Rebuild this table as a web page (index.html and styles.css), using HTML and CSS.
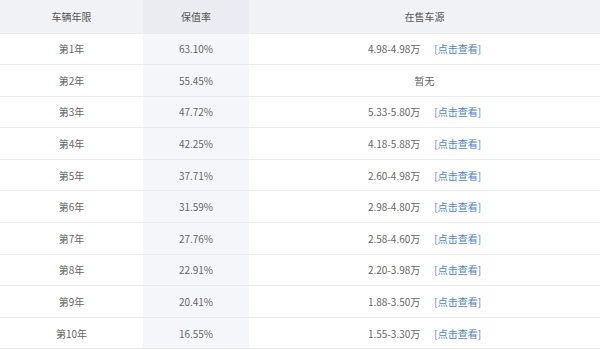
FILE: index.html
```html
<!DOCTYPE html>
<html lang="zh-CN">
<head>
  <meta charset="UTF-8" />
  <title>保值率</title>
  <link rel="stylesheet" href="styles.css">
</head>
<body>
  <table class="rate-table">
    <thead>
      <tr>
        <th class="col-year">车辆年限</th>
        <th class="col-rate">保值率</th>
        <th class="col-source">在售车源</th>
      </tr>
    </thead>
    <tbody>
      <tr><td>第1年</td><td class="col-rate">63.10%</td><td><span class="price">4.98-4.98万</span><a href="#">[点击查看]</a></td></tr>
      <tr><td>第2年</td><td class="col-rate">55.45%</td><td>暂无</td></tr>
      <tr><td>第3年</td><td class="col-rate">47.72%</td><td><span class="price">5.33-5.80万</span><a href="#">[点击查看]</a></td></tr>
      <tr><td>第4年</td><td class="col-rate">42.25%</td><td><span class="price">4.18-5.88万</span><a href="#">[点击查看]</a></td></tr>
      <tr><td>第5年</td><td class="col-rate">37.71%</td><td><span class="price">2.60-4.98万</span><a href="#">[点击查看]</a></td></tr>
      <tr><td>第6年</td><td class="col-rate">31.59%</td><td><span class="price">2.98-4.80万</span><a href="#">[点击查看]</a></td></tr>
      <tr><td>第7年</td><td class="col-rate">27.76%</td><td><span class="price">2.58-4.60万</span><a href="#">[点击查看]</a></td></tr>
      <tr><td>第8年</td><td class="col-rate">22.91%</td><td><span class="price">2.20-3.98万</span><a href="#">[点击查看]</a></td></tr>
      <tr><td>第9年</td><td class="col-rate">20.41%</td><td><span class="price">1.88-3.50万</span><a href="#">[点击查看]</a></td></tr>
      <tr><td>第10年</td><td class="col-rate">16.55%</td><td><span class="price">1.55-3.30万</span><a href="#">[点击查看]</a></td></tr>
    </tbody>
  </table>
</body>
</html>
```

FILE: styles.css
```css
* {
  margin: 0; padding: 0; box-sizing: border-box;
}

body {
  background: #fff;
  font-family: "Noto Sans CJK SC", "Noto Sans", sans-serif;
  font-size: 10px;
  color: #666;
}

/* Table */
.rate-table {
  width: 600px;
  border-collapse: collapse;
  table-layout: fixed;
}
.rate-table th,
.rate-table td {
  text-align: center;
  vertical-align: middle;
  font-weight: normal;
  border-bottom: 1px solid #ebebeb;
}
.rate-table th {
  height: 33px;
  background: #f1f2f6;
  color: #555;
}
.rate-table td {
  height: 31.6px;
}
.rate-table .col-year { width: 143px; }
.rate-table .col-rate { width: 106px; }
.rate-table td.col-rate {
  background: #f5f6f9;
}
.rate-table th.col-rate {
  background: #ebecf1;
}

.price {
  margin-right: 14px;
}
.rate-table a {
  color: #4b7fd0;
  text-decoration: none;
}
```
